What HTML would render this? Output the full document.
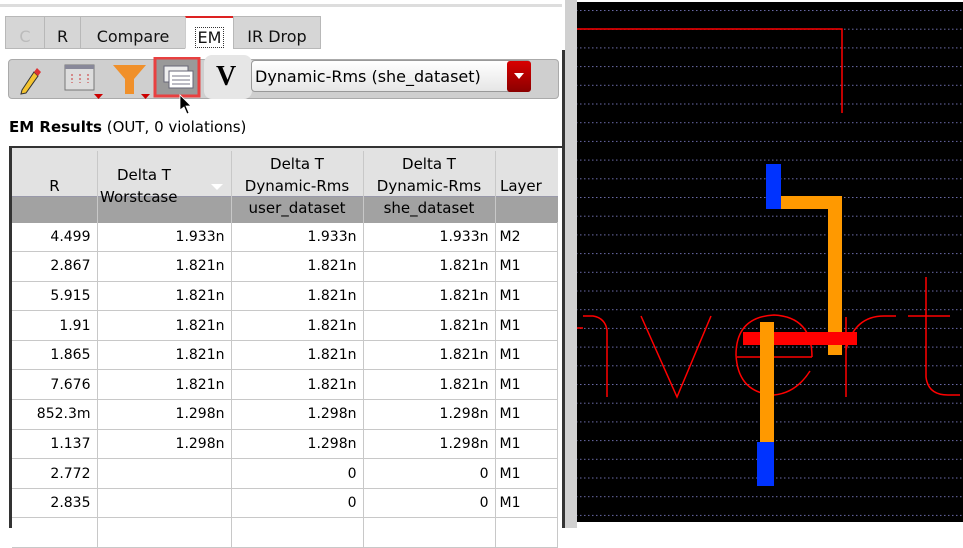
<!DOCTYPE html>
<html><head><meta charset="utf-8"><style>
*{margin:0;padding:0;box-sizing:border-box}
body{width:963px;height:528px;overflow:hidden;background:#fff;font-family:"DejaVu Sans","Liberation Sans",sans-serif;position:relative;color:#000}
.a{position:absolute}
.tab{position:absolute;top:16px;height:33px;background:#d6d6d6;border:1px solid #b8b8b8;font-size:16px;line-height:40px;text-align:center;color:#111}
table{border-collapse:collapse;font-size:14px;table-layout:fixed}
td{height:29.6px;border-right:1px solid #c8c8c8;border-bottom:1px solid #c8c8c8;text-align:right;padding:0 6px;white-space:nowrap}
td.l{text-align:left;padding-left:4px}
.h{font-size:15px}
</style></head><body>
<div class="a" style="left:0;top:4px;width:562px;height:3px;background:#ddd"></div>
<div class="tab" style="left:5px;width:40px;color:#bbb">C</div>
<div class="tab" style="left:44px;width:37px">R</div>
<div class="tab" style="left:80px;width:106px">Compare</div>
<div class="tab" style="left:185px;width:49px;background:#fff;border-top:2px solid #d22;border-color:#d22 #ccc #fff #ccc"><span style="border:1px dotted #333;padding:0 2px;line-height:20px">EM</span></div>
<div class="tab" style="left:233px;width:88px">IR Drop</div>
<!-- toolbar -->
<div class="a" style="left:8px;top:59px;width:551px;height:40px;background:#cfcfcf;border:1px solid #aaa;border-radius:4px"></div>
<div class="a" style="left:204px;top:55px;width:48px;height:44px;background:#e6e6e6;border-radius:8px"></div>
<svg class="a" style="left:10px;top:57px" width="200" height="42">
<path d="M12 33 L24 15 L28 19 L16 36 L11 37 Z" fill="#f4c430" stroke="#333" stroke-width="1"/>
<path d="M24 15 L27 11 L31 15 L28 19Z" fill="#d33"/>
<rect x="55" y="8" width="29" height="25" fill="#ddd" stroke="#777"/><rect x="55" y="8" width="29" height="4" fill="#889"/>
<path d="M62 17v9M70 17v9M78 17v9" stroke="#c33" stroke-dasharray="2 2"/>
<path d="M84 37h9l-4.5 5z" fill="#c00"/>
<path d="M103 8h33l-12 14v15h-9V22z" fill="#f0902a"/>
<path d="M131 37h9l-4.5 5z" fill="#c00"/>
<rect x="145" y="1" width="44" height="38" fill="#999" stroke="#e84040" stroke-width="3"/>
<rect x="154" y="9" width="24" height="16" fill="#eee" stroke="#667"/><rect x="159" y="14" width="24" height="17" fill="#fff" stroke="#667"/>
<path d="M162 19h18M162 23h18M162 27h18" stroke="#778"/>
</svg>
<div class="a" style="left:216px;top:61px;font:bold 28px 'Liberation Serif',serif">V</div>
<div class="a" style="left:251px;top:60px;width:280px;height:32px;background:linear-gradient(#fff,#e6e6e6);border:1px solid #999;border-radius:4px;font-size:16px;line-height:31px;padding-left:3px">Dynamic-Rms (she_dataset)</div>
<div class="a" style="left:507px;top:61px;width:24px;height:31px;background:linear-gradient(#d80000,#8a0000);border-radius:3px"><div style="margin:12px auto 0;width:0;height:0;border:5px solid transparent;border-top:6px solid #fff"></div></div>
<svg class="a" style="left:178px;top:94px" width="16" height="22"><path d="M2 1v15l4-3 3 7 2-1-3-7h5z" fill="#000" stroke="#fff" stroke-width=".8"/></svg>
<div class="a" style="left:9px;top:118px;font-size:15px"><b>EM Results</b> (OUT, 0 violations)</div>
<!-- table -->
<div class="a" style="left:9px;top:146px;width:553px;height:382px;border-left:3px solid #333;border-top:2px solid #333"></div>
<div class="a" style="left:12px;top:148px;width:546px;height:48px;background:#e2e2e2"></div>
<div class="a" style="left:12px;top:196px;width:546px;height:27px;background:#a2a2a2;border-top:1px solid #99a"></div>
<div class="a" style="left:97px;top:151px;width:1px;height:71px;background:#c8c8c8"></div>
<div class="a" style="left:231px;top:151px;width:1px;height:71px;background:#c8c8c8"></div>
<div class="a" style="left:363px;top:151px;width:1px;height:71px;background:#c8c8c8"></div>
<div class="a" style="left:495px;top:151px;width:1px;height:71px;background:#c8c8c8"></div>
<div class="a h" style="left:12px;top:177px;width:85px;text-align:center">R</div>
<div class="a h" style="left:117px;top:166px">Delta T</div>
<div class="a h" style="left:100px;top:188px">Worstcase</div>
<div class="a" style="left:211px;top:184px;border:6px solid transparent;border-top:6px solid #fff"></div>
<div class="a h" style="left:231px;top:153px;width:132px;text-align:center;line-height:22px">Delta T<br>Dynamic-Rms<br>user_dataset</div>
<div class="a h" style="left:363px;top:153px;width:132px;text-align:center;line-height:22px">Delta T<br>Dynamic-Rms<br>she_dataset</div>
<div class="a h" style="left:500px;top:177px">Layer</div>
<table class="a" style="left:12px;top:222px;width:546px">
<colgroup><col style="width:85px"><col style="width:134px"><col style="width:132px"><col style="width:132px"><col></colgroup>
<tr><td>4.499</td><td>1.933n</td><td>1.933n</td><td>1.933n</td><td class="l">M2</td></tr>
<tr><td>2.867</td><td>1.821n</td><td>1.821n</td><td>1.821n</td><td class="l">M1</td></tr>
<tr><td>5.915</td><td>1.821n</td><td>1.821n</td><td>1.821n</td><td class="l">M1</td></tr>
<tr><td>1.91</td><td>1.821n</td><td>1.821n</td><td>1.821n</td><td class="l">M1</td></tr>
<tr><td>1.865</td><td>1.821n</td><td>1.821n</td><td>1.821n</td><td class="l">M1</td></tr>
<tr><td>7.676</td><td>1.821n</td><td>1.821n</td><td>1.821n</td><td class="l">M1</td></tr>
<tr><td>852.3m</td><td>1.298n</td><td>1.298n</td><td>1.298n</td><td class="l">M1</td></tr>
<tr><td>1.137</td><td>1.298n</td><td>1.298n</td><td>1.298n</td><td class="l">M1</td></tr>
<tr><td>2.772</td><td></td><td>0</td><td>0</td><td class="l">M1</td></tr>
<tr><td>2.835</td><td></td><td>0</td><td>0</td><td class="l">M1</td></tr>
<tr><td></td><td></td><td></td><td></td><td></td></tr>
</table>
<div class="a" style="left:562px;top:50px;width:3px;height:478px;background:#333"></div>
<div class="a" style="left:565px;top:0;width:12px;height:528px;background:#d0d0d0"></div>
<!-- layout view -->
<svg class="a" style="left:577px;top:2px" width="386" height="520" viewBox="577 2 386 520">
<defs><pattern id="d" x="0" y="10" width="4" height="18.7" patternUnits="userSpaceOnUse"><rect width="1.5" height="1" fill="#6a6aa8"/></pattern></defs>
<rect x="577" y="2" width="386" height="520" fill="#000"/>
<rect x="577" y="2" width="386" height="520" fill="url(#d)"/>
<g fill="none" stroke="#f00" stroke-width="1.5">
<path d="M577 29H842V113"/>
<path d="M577 328h6M583 316h10q12 2 14 14V397"/>
<path d="M641 316L677 397L711 316"/>
<path d="M737 357h75M812 357q0-40-38-42q-38 2-38 40q2 38 38 40q22-2 36-24"/>
<path d="M846 317V397M846 350q8-34 38-34h12"/>
<path d="M908 316h42M926 277V377q2 18 22 18h12"/>
</g>
<rect x="766" y="164" width="15" height="45" fill="#0033ff"/>
<rect x="781" y="196" width="61" height="13" fill="#ff9900"/>
<rect x="828" y="196" width="14" height="159" fill="#ff9900"/>
<rect x="743" y="332" width="114" height="13" fill="#ff0000"/>
<rect x="760" y="322" width="14" height="120" fill="#ff9900"/>
<rect x="757" y="442" width="17" height="44" fill="#0033ff"/>
</svg>
</body></html>
